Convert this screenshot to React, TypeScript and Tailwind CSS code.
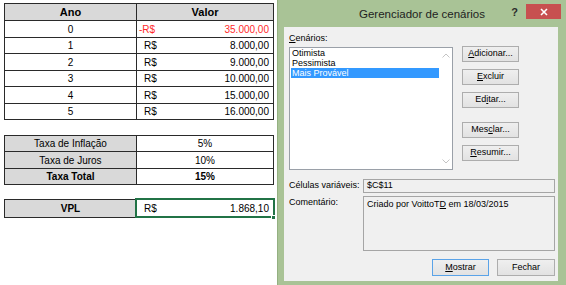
import React from "react";

const F = { fontFamily: '"Liberation Sans", Arial, sans-serif' };

function Acc({ t, i }: { t: string; i: number }) {
  return (
    <>
      {t.slice(0, i)}
      <span className="underline underline-offset-1">{t[i]}</span>
      {t.slice(i + 1)}
    </>
  );
}

function Btn({ label, idx, cls }: { label: string; idx: number; cls: string }) {
  return (
    <div
      className={
        "flex items-center justify-center border bg-gradient-to-b from-[#efefef] to-[#e2e2e2] text-[9px] text-black " +
        cls
      }
    >
      {idx >= 0 ? <Acc t={label} i={idx} /> : label}
    </div>
  );
}

const rows1: { ano: string; neg?: boolean; v: string; h: string }[] = [
  { ano: "0", neg: true, v: "35.000,00", h: "h-[17px]" },
  { ano: "1", v: "8.000,00", h: "h-[16px]" },
  { ano: "2", v: "9.000,00", h: "h-[17px]" },
  { ano: "3", v: "10.000,00", h: "h-[16px]" },
  { ano: "4", v: "15.000,00", h: "h-[17px]" },
  { ano: "5", v: "16.000,00", h: "h-[16px]" },
];

export default function App() {
  return (
    <div className="w-[566px] h-[285px] bg-white flex overflow-hidden" style={F}>
      {/* Spreadsheet */}
      <div className="w-[277px] shrink-0 pl-[4px] pt-[3px] text-[10px] text-black">
        <div className="w-[270px] border-t border-l border-r border-[#2a2a2a]">
          <div className="flex h-[17px] border-b border-[#2a2a2a] bg-[#d9d9d9] font-bold text-[11px]">
            <div className="w-[132px] border-r border-[#2a2a2a] flex items-center justify-center">Ano</div>
            <div className="flex-1 flex items-center justify-center">Valor</div>
          </div>
          {rows1.map((r) => (
            <div key={r.ano} className={"flex border-b border-[#2a2a2a] " + r.h}>
              <div className="w-[132px] border-r border-[#2a2a2a] flex items-center justify-center">{r.ano}</div>
              <div
                className={
                  "flex-1 flex items-center justify-between pr-[4px] " +
                  (r.neg ? "pl-[2px] text-[#ff2a2a]" : "pl-[7px]")
                }
              >
                <span>{r.neg ? "-R$" : "R$"}</span>
                <span>{r.v}</span>
              </div>
            </div>
          ))}
        </div>

        <div className="mt-[15px] w-[270px] border-t border-l border-r border-[#2a2a2a]">
          <div className="flex h-[16px] border-b border-[#2a2a2a]">
            <div className="w-[132px] bg-[#d9d9d9] border-r border-[#2a2a2a] flex items-center justify-center">
              Taxa de Inflação
            </div>
            <div className="flex-1 flex items-center justify-center">5%</div>
          </div>
          <div className="flex h-[17px] border-b border-[#2a2a2a]">
            <div className="w-[132px] bg-[#d9d9d9] border-r border-[#2a2a2a] flex items-center justify-center">
              Taxa de Juros
            </div>
            <div className="flex-1 flex items-center justify-center">10%</div>
          </div>
          <div className="flex h-[16px] border-b border-[#2a2a2a] font-bold">
            <div className="w-[132px] bg-[#d9d9d9] border-r border-[#2a2a2a] flex items-center justify-center">
              Taxa Total
            </div>
            <div className="flex-1 flex items-center justify-center">15%</div>
          </div>
        </div>

        <div className="mt-[14px] w-[270px] border-t border-l border-r border-[#2a2a2a]">
          <div className="flex h-[18px] border-b border-[#2a2a2a]">
            <div className="w-[132px] bg-[#d9d9d9] border-r border-[#2a2a2a] flex items-center justify-center font-bold">
              VPL
            </div>
            <div className="relative flex-1 flex items-center justify-between pl-[7px] pr-[4px]">
              <span>R$</span>
              <span>1.868,10</span>
              <div className="absolute -left-[2px] -top-[2px] -right-[2px] -bottom-[1px] border-2 border-[#217346]" />
              <div className="absolute -right-[3px] -bottom-[3px] w-[5px] h-[5px] bg-[#217346] border border-white" />
            </div>
          </div>
        </div>
      </div>

      {/* Dialog */}
      <div className="w-[289px] h-[285px] shrink-0 flex flex-col bg-[#a9c396] border-l border-[#94b081] pl-[6px] pr-[8px] pb-[4px]">
        <div className="relative h-[27px] shrink-0 flex items-center justify-center -mr-[8px] -ml-[6px]">
          <span className="text-[11.5px] text-[#1e1e1e] pt-[2px]">Gerenciador de cenários</span>
          <span className="absolute right-[48px] top-[4px] text-[11px] font-bold text-[#2b2b2b]">?</span>
          <div className="absolute right-[5px] top-[4px] w-[35px] h-[15px] bg-[#c75050] flex items-center justify-center">
            <svg width="8" height="8" viewBox="0 0 8 8">
              <path d="M1 1 L7 7 M7 1 L1 7" stroke="white" strokeWidth="1.6" />
            </svg>
          </div>
        </div>

        <div className="flex-1 bg-[#f0f0f0] flex flex-col pt-[4px] pl-[5px] pr-[2px] text-[9px] text-black">
          <div className="flex">
            <div className="w-[164px] flex flex-col">
              <div className="h-[14px] leading-[14px] mb-[2px]">
                <Acc t="Cenários:" i={0} />
              </div>
              <div className="relative h-[123px] bg-white border border-[#9aa0a8] flex">
                <div className="w-[149px] flex flex-col">
                  <div className="h-[10px] leading-[10px] pl-[2px]">Otimista</div>
                  <div className="h-[10px] leading-[10px] pl-[2px]">Pessimista</div>
                  <div className="h-[10px] leading-[10px] ml-[1px] pl-[1px] bg-[#3399ff] text-white">
                    Mais Provável
                  </div>
                </div>
                <div className="flex-1 flex flex-col items-center justify-between pt-[5px] pb-[5px]">
                  <svg width="8" height="5" viewBox="0 0 8 5">
                    <path d="M0.5 4.5 L4 1 L7.5 4.5" fill="none" stroke="#c4c4c4" strokeWidth="1" />
                  </svg>
                  <svg width="8" height="5" viewBox="0 0 8 5">
                    <path d="M0.5 0.5 L4 4 L7.5 0.5" fill="none" stroke="#c4c4c4" strokeWidth="1" />
                  </svg>
                </div>
              </div>
            </div>
            <div className="ml-[9px] mt-[15px] flex flex-col w-[57px]">
              <Btn label="Adicionar..." idx={0} cls="h-[16px] border-[#adadad]" />
              <Btn label="Excluir" idx={0} cls="h-[16px] mt-[7px] border-[#adadad]" />
              <Btn label="Editar..." idx={2} cls="h-[16px] mt-[7px] border-[#adadad]" />
              <Btn label="Mesclar..." idx={3} cls="h-[16px] mt-[14px] border-[#adadad]" />
              <Btn label="Resumir..." idx={0} cls="h-[16px] mt-[7px] border-[#adadad]" />
            </div>
          </div>

          <div className="flex items-center mt-[9px]">
            <div className="w-[74px]">Células variáveis:</div>
            <div className="w-[192px] h-[14px] border border-[#a5a5a5] bg-[#f0f0f0] flex items-center pl-[3px]">
              $C$11
            </div>
          </div>

          <div className="flex mt-[3px]">
            <div className="w-[74px] leading-[12px]">Comentário:</div>
            <div className="w-[192px] h-[55px] border border-[#a5a5a5] bg-[#f0f0f0] pl-[3px] pt-[1px] leading-[12px]">
              Criado por VoittoT<span className="underline underline-offset-1">D</span> em 18/03/2015
            </div>
          </div>

          <div className="flex justify-end mt-[8px] pr-[1px]">
            <Btn label="Mostrar" idx={0} cls="w-[57px] h-[17px] border-[#5aa3e8]" />
            <Btn label="Fechar" idx={-1} cls="w-[58px] h-[17px] ml-[8px] border-[#adadad]" />
          </div>
        </div>
      </div>
    </div>
  );
}
